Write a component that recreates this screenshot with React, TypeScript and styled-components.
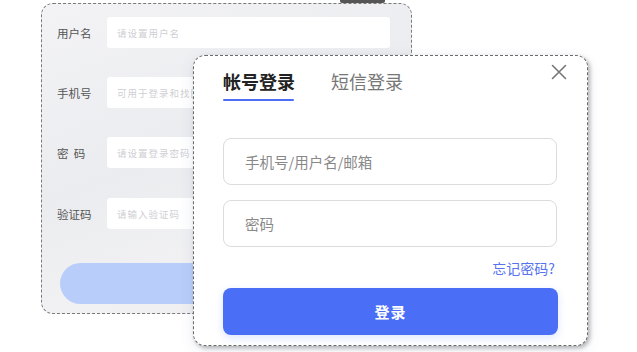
import React from "react";
import styled, { createGlobalStyle } from "styled-components";

const Global = createGlobalStyle`
  html, body { margin: 0; padding: 0; background: #ffffff; }
  body { font-family: "Noto Sans CJK SC", "Noto Sans", sans-serif; }
  * { box-sizing: border-box; }
`;

const Stage = styled.div`
  position: relative;
  width: 637px;
  height: 352px;
  overflow: hidden;
  background: #ffffff;
`;

const TopNub = styled.div`
  position: absolute;
  left: 340px;
  top: 0;
  width: 45px;
  height: 3px;
  border-radius: 0 0 2px 2px;
  background: #555;
`;

const BackCard = styled.div`
  position: absolute;
  left: 41px;
  top: 3px;
  width: 371px;
  height: 311px;
  border: 1px dashed #7a7a7a;
  border-radius: 12px;
  background: linear-gradient(160deg, #f3f3f6 0%, #ebecef 45%, #f1f1f3 70%, #ececef 100%);
  display: flex;
  flex-direction: column;
  padding: 13px 21px 0 15px;
`;

const FormRow = styled.div<{ $gap: number }>`
  display: flex;
  align-items: center;
  height: 31px;
  margin-bottom: ${(p) => p.$gap}px;
`;

const BackLabel = styled.div`
  width: 50px;
  font-size: 11.5px;
  color: #555;
  white-space: pre;
`;

const BackInput = styled.div`
  flex: 1;
  height: 31px;
  background: #ffffff;
  border-radius: 3px;
  display: flex;
  align-items: center;
  padding-left: 10px;
  font-size: 9.5px;
  color: #cfcfd4;
  letter-spacing: 1px;
`;

const BackButton = styled.div`
  margin-left: 3px;
  height: 41px;
  border-radius: 21px;
  background: #b9cdfb;
`;

const FrontCard = styled.div`
  position: absolute;
  left: 193px;
  top: 55px;
  width: 395px;
  height: 291px;
  border: 1px dashed #6a6a6a;
  border-radius: 12px;
  background: #ffffff;
  box-shadow: 2px 2px 4px rgba(0, 0, 0, 0.28), 0 4px 14px rgba(80, 100, 160, 0.12);
  display: flex;
  flex-direction: column;
  padding: 12px 29px 0 29px;
`;

const CloseBtn = styled.div`
  position: absolute;
  right: 20px;
  top: 5px;
  width: 16px;
  height: 16px;
  color: #777;
`;

const Tabs = styled.div`
  display: flex;
  gap: 36px;
  height: 34px;
`;

const Tab = styled.div<{ $active?: boolean }>`
  position: relative;
  font-size: 18px;
  line-height: 26px;
  font-weight: ${(p) => (p.$active ? 700 : 400)};
  color: ${(p) => (p.$active ? "#222" : "#777")};
  &::after {
    content: "";
    display: ${(p) => (p.$active ? "block" : "none")};
    position: absolute;
    left: 0;
    right: 1px;
    top: 31px;
    height: 2px;
    border-radius: 1px;
    background: #4b6ef5;
  }
`;

const Field = styled.div<{ $mt: number }>`
  margin-top: ${(p) => p.$mt}px;
  height: 47px;
  width: 334px;
  border: 1px solid #dcdcdc;
  border-radius: 8px;
  display: flex;
  align-items: center;
  padding-left: 21px;
  font-size: 14.5px;
  color: #888;
`;

const Forgot = styled.div`
  margin-top: 12px;
  width: 334px;
  text-align: right;
  font-size: 14px;
  line-height: 19px;
  color: #5674ee;
  padding-right: 2px;
`;

const LoginButton = styled.div`
  margin-top: 10px;
  width: 335px;
  height: 47px;
  border-radius: 8px;
  background: #4a6ff6;
  box-shadow: 0 3px 8px rgba(74, 111, 246, 0.18);
  display: flex;
  align-items: center;
  justify-content: center;
  color: #ffffff;
  font-size: 15px;
  font-weight: 700;
  letter-spacing: 1px;
`;

export default function App() {
  return (
    <Stage>
      <Global />
      <TopNub />
      <BackCard>
        <FormRow $gap={29}>
          <BackLabel>用户名</BackLabel>
          <BackInput>请设置用户名</BackInput>
        </FormRow>
        <FormRow $gap={29}>
          <BackLabel>手机号</BackLabel>
          <BackInput>可用于登录和找回密码</BackInput>
        </FormRow>
        <FormRow $gap={30}>
          <BackLabel>{"密  码"}</BackLabel>
          <BackInput>请设置登录密码</BackInput>
        </FormRow>
        <FormRow $gap={34}>
          <BackLabel>验证码</BackLabel>
          <BackInput>请输入验证码</BackInput>
        </FormRow>
        <BackButton />
      </BackCard>
      <FrontCard>
        <CloseBtn>
          <svg width="16" height="16" viewBox="0 0 16 16">
            <path d="M1.5 1.5 L14.5 14.5 M14.5 1.5 L1.5 14.5" stroke="#777" strokeWidth="1.6" strokeLinecap="round" />
          </svg>
        </CloseBtn>
        <Tabs>
          <Tab $active>帐号登录</Tab>
          <Tab>短信登录</Tab>
        </Tabs>
        <Field $mt={36}>手机号/用户名/邮箱</Field>
        <Field $mt={15}>密码</Field>
        <Forgot>忘记密码?</Forgot>
        <LoginButton>登录</LoginButton>
      </FrontCard>
    </Stage>
  );
}
